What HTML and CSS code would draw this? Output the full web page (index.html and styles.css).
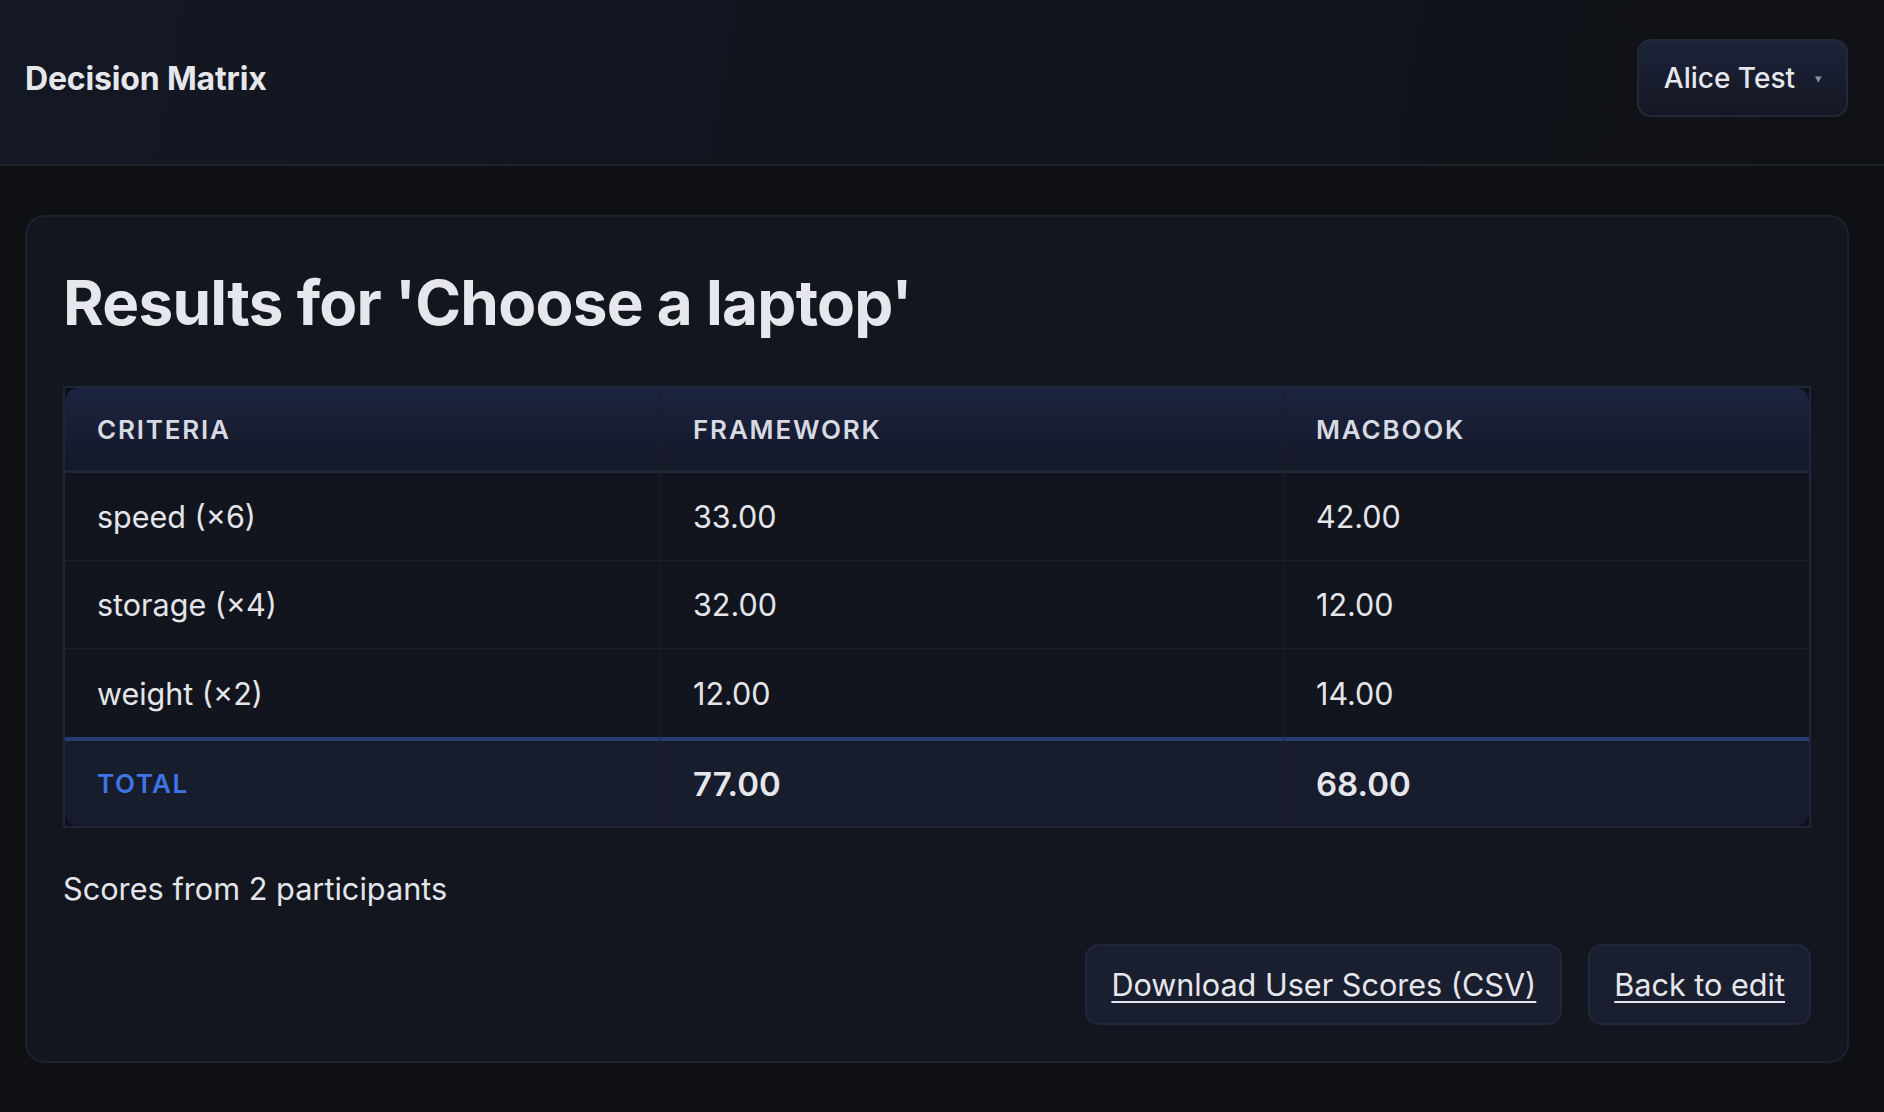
FILE: index.html
```html
<!DOCTYPE html>
<html lang="en">
<head>
<meta charset="utf-8">
<title>Decision Matrix</title>
<link rel="stylesheet" href="styles.css">
</head>
<body>
<header class="topbar">
  <div class="brand">Decision Matrix</div>
  <button class="user-btn" type="button">Alice Test <span class="caret">&#9662;</span></button>
</header>
<main class="page">
  <section class="card">
    <h1 class="title">Results for 'Choose a laptop'</h1>
    <div class="table-wrap">
      <table class="results">
        <colgroup>
          <col class="c1"><col class="c2"><col class="c3">
        </colgroup>
        <thead>
          <tr><th>Criteria</th><th>Framework</th><th>MacBook</th></tr>
        </thead>
        <tbody>
          <tr><td>speed (&times;6)</td><td>33.00</td><td>42.00</td></tr>
          <tr><td>storage (&times;4)</td><td>32.00</td><td>12.00</td></tr>
          <tr><td>weight (&times;2)</td><td>12.00</td><td>14.00</td></tr>
        </tbody>
        <tfoot>
          <tr><td class="total-label">Total</td><td>77.00</td><td>68.00</td></tr>
        </tfoot>
      </table>
    </div>
    <p class="note">Scores from 2 participants</p>
    <div class="actions">
      <a class="btn" href="#">Download User Scores (CSV)</a>
      <a class="btn" href="#">Back to edit</a>
    </div>
  </section>
</main>
</body>
</html>
```
FILE: styles.css
```css
* { box-sizing: border-box; }
html, body { margin: 0; padding: 0; }
body {
  background: #0e1014;
  color: #e4e5ea;
  font-family: Inter, "Noto Sans", "Liberation Sans", sans-serif;
  min-height: 1112px;
}
.topbar {
  height: 166px;
  display: flex;
  align-items: center;
  justify-content: space-between;
  padding: 0 36px 8px 25px;
  border-bottom: 2px solid #1c212c;
  background: linear-gradient(100deg, #141824 0%, #12151e 50%, #0f1115 100%);
}
.brand {
  font-size: 32px;
  font-weight: 700;
  color: #e6e7ec;
  letter-spacing: -0.005em;
}
.user-btn {
  height: 78px;
  padding: 0 24px 0 25px;
  display: flex;
  align-items: center;
  gap: 20px;
  font-family: inherit;
  font-size: 28px;
  font-weight: 500;
  color: #e6e7ec;
  background: linear-gradient(180deg, #1c2339 0%, #141824 100%);
  border: 2px solid #232938;
  border-radius: 14px;
}
.caret {
  font-size: 13px;
  color: #8a8f9c;
}
.page {
  padding: 49px 35px 40px 25px;
}
.card {
  background: #13161f;
  border: 2px solid #1c2130;
  border-radius: 20px;
  padding: 36px;
}
.title {
  margin: 12px 0 0;
  font-size: 62px;
  line-height: 76px;
  font-weight: 700;
  color: #e6e7ec;
  letter-spacing: -0.012em;
}
.table-wrap {
  margin-top: 45px;
  border: 2px solid #20263a;
  background: #0f1119;
}
.results {
  width: 100%;
  border-collapse: separate;
  border-spacing: 0;
  table-layout: fixed;
  border-radius: 14px;
  overflow: hidden;
  background: #12151d;
}
.c1 { width: 595px; }
.c2 { width: 623px; }
.results th,
.results td {
  text-align: left;
  padding: 0 32px;
}
.results th {
  height: 85px;
  background: linear-gradient(180deg, #1c2340 0%, #141926 100%);
  border-bottom: 3px solid #20273a;
  font-size: 26px;
  font-weight: 600;
  letter-spacing: 0.07em;
  text-transform: uppercase;
  color: #d8dae3;
}
.results th + th,
.results td + td {
  border-left: 1px solid #1a1e29;
}
.results tbody td {
  height: 88px;
  font-size: 30.5px;
  color: #e4e5ea;
  border-bottom: 1px solid #1b1f29;
}
.results tbody tr:last-child td {
  border-bottom: 0;
}
.results tfoot td {
  height: 89px;
  background: #171d2d;
  border-top: 4px solid #263c70;
  font-size: 33px;
  font-weight: 600;
  color: #e6e7ec;
}
.results tfoot td.total-label {
  font-size: 26px;
  font-weight: 600;
  letter-spacing: 0.06em;
  text-transform: uppercase;
  color: #3f74e6;
}
.note {
  margin: 38px 0 0;
  font-size: 30.7px;
  line-height: 45px;
  color: #e4e5ea;
}
.actions {
  margin-top: 33px;
  display: flex;
  justify-content: flex-end;
  gap: 26px;
}
.btn {
  height: 81px;
  display: flex;
  align-items: center;
  padding: 0 24px;
  background: #1a1f30;
  border: 2px solid #21273a;
  border-radius: 14px;
  color: #e6e7ec;
  font-size: 30.6px;
  text-decoration: underline;
  text-underline-offset: 5px;
  text-decoration-thickness: 2px;
}
```
